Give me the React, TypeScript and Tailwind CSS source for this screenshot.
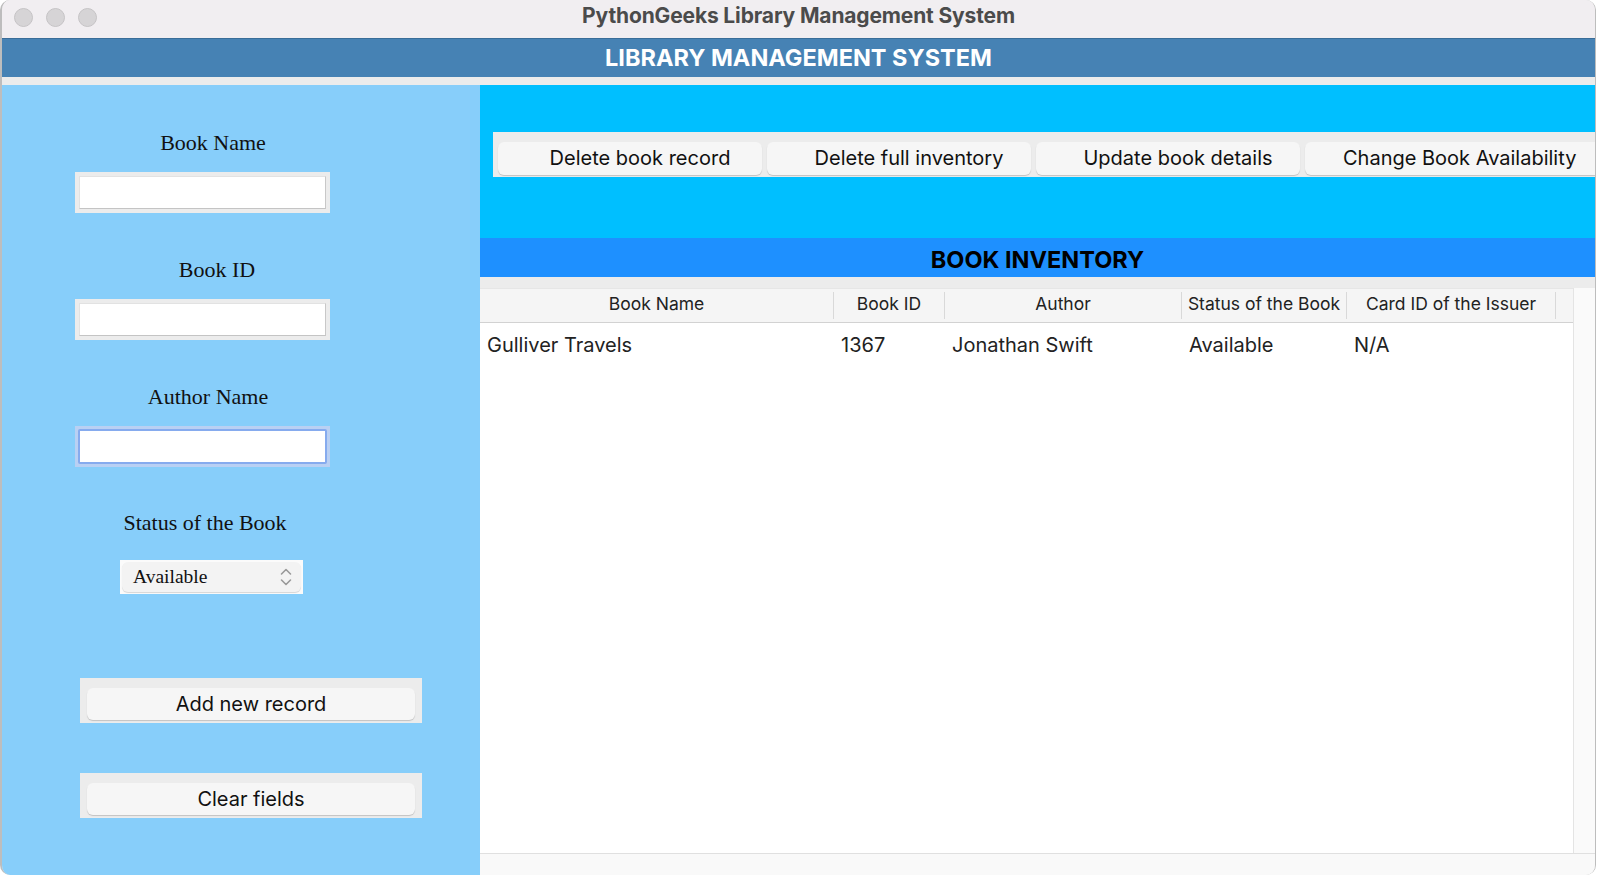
import React from "react";

// column widths of the inventory table (px)
const columns = [
  { label: "Book Name", w: "w-[354px]" },
  { label: "Book ID", w: "w-[111px]" },
  { label: "Author", w: "w-[237px]" },
  { label: "Status of the Book", w: "w-[165px]" },
  { label: "Card ID of the Issuer", w: "w-[209px]" },
];

const rows = [["Gulliver Travels", "1367", "Jonathan Swift", "Available", "N/A"]];

const actions = [
  { label: "Delete book record", w: "w-[264px] justify-center pl-[20px]" },
  { label: "Delete full inventory", w: "w-[264px] justify-center pl-[20px]" },
  { label: "Update book details", w: "w-[264px] justify-center pl-[20px]" },
  { label: "Change Book Availability", w: "w-[316px] justify-start pl-[38px]" },
];

function Entry({ focused = false }: { focused?: boolean }) {
  if (focused) {
    return (
      <div className="ml-[73px] w-[255px] h-[41px] bg-[#b9d0f3] p-[3px]">
        <div className="w-full h-full bg-white border-2 border-[#86abee] rounded-[2px]" />
      </div>
    );
  }
  return (
    <div className="ml-[73px] w-[255px] h-[41px] bg-[#ececec] p-[4px]">
      <div className="w-full h-full bg-white border border-t-[#e2e2e2] border-l-[#e2e2e2] border-b-[#c4c4c4] border-r-[#c8c8c8]" />
    </div>
  );
}

function Label({ text, ml }: { text: string; ml: string }) {
  return (
    <div
      className={`${ml} w-[300px] text-center h-[24px] leading-[24px] text-[22px] text-[#111] font-['Liberation_Serif',serif]`}
    >
      {text}
    </div>
  );
}

function PanelButton({ text, mt }: { text: string; mt: string }) {
  return (
    <div className={`${mt} ml-[78px] w-[342px] h-[45px] bg-[#ececec] pt-[10px] pb-[3px] px-[7px]`}>
      <div className="w-full h-full rounded-[6px] bg-[#f6f6f6] shadow-[0_1px_1px_rgba(0,0,0,0.18)] flex items-center justify-center pb-[1px] text-[20px] text-[#111] font-['Inter',sans-serif]">
        {text}
      </div>
    </div>
  );
}

function UpDown() {
  return (
    <svg width="14" height="22" viewBox="0 0 14 22" fill="none" stroke="#9a9a9a" strokeWidth="1.6" strokeLinecap="round" strokeLinejoin="round">
      <path d="M2.5 8 L7 3.5 L11.5 8" />
      <path d="M2.5 14 L7 18.5 L11.5 14" />
    </svg>
  );
}

export default function App() {
  return (
    <div className="w-[1600px] h-[875px] bg-white flex overflow-hidden">
      <div className="w-[1596px] h-full flex flex-col border-l-2 border-r border-[#bdbdbd] rounded-[10px] overflow-hidden bg-[#ececec]">
        {/* title bar */}
        <div className="h-[38px] shrink-0 bg-[#f1eef1] grid grid-cols-[1fr_auto_1fr] items-center">
          <div className="flex items-center gap-[13px] pl-[12px] pb-[4px]">
            <span className="w-[19px] h-[19px] rounded-full bg-[#d6d4d6] border border-[#c5c3c5]" />
            <span className="w-[19px] h-[19px] rounded-full bg-[#d6d4d6] border border-[#c5c3c5]" />
            <span className="w-[19px] h-[19px] rounded-full bg-[#d6d4d6] border border-[#c5c3c5]" />
          </div>
          <div className="text-[21px] leading-[24px] pb-[6px] font-bold text-[#4b4b4b] tracking-[-0.15px] font-['Inter',sans-serif]">
            PythonGeeks Library Management System
          </div>
          <div />
        </div>

        {/* heading banner */}
        <div className="h-[39px] shrink-0 bg-[#4682b4] border-t border-[#3a6d98] flex items-center justify-center">
          <span className="text-white text-[23.5px] font-bold font-['Inter',sans-serif]">LIBRARY MANAGEMENT SYSTEM</span>
        </div>
        <div className="h-[8px] shrink-0 bg-[#ececec]" />

        <div className="flex-1 flex min-h-0">
          {/* left form panel */}
          <div className="w-[478px] shrink-0 bg-[#87cefa] flex flex-col pt-[46px]">
            <Label text="Book Name" ml="ml-[61px]" />
            <div className="mt-[17px]">
              <Entry />
            </div>
            <div className="mt-[45px]">
              <Label text="Book ID" ml="ml-[65px]" />
            </div>
            <div className="mt-[17px]">
              <Entry />
            </div>
            <div className="mt-[45px]">
              <Label text="Author Name" ml="ml-[56px]" />
            </div>
            <div className="mt-[17px]">
              <Entry focused />
            </div>
            <div className="mt-[44px]">
              <Label text="Status of the Book" ml="ml-[53px]" />
            </div>
            <div className="mt-[25px] ml-[118px] w-[183px] h-[34px] bg-[#fbfbfb] p-[2px]">
              <div className="w-full h-full rounded-[6px] bg-[#f3f3f3] shadow-[0_1px_1px_rgba(0,0,0,0.15)] flex items-center justify-between pl-[11px] pr-[8px]">
                <span className="text-[19.5px] text-[#111] font-['Liberation_Serif',serif]">Available</span>
                <UpDown />
              </div>
            </div>
            <PanelButton text="Add new record" mt="mt-[84px]" />
            <PanelButton text="Clear fields" mt="mt-[50px]" />
          </div>

          {/* right panel */}
          <div className="flex-1 min-w-0 flex flex-col overflow-hidden">
            <div className="h-[153px] shrink-0 bg-[#00bfff] pt-[47px] pl-[13px]">
              <div className="h-[45px] w-[1140px] bg-[#ececec] flex gap-[5px] pt-[10px] pb-[2px] pl-[5px]">
                {actions.map((a) => (
                  <div
                    key={a.label}
                    className={`${a.w} shrink-0 h-full rounded-[6px] bg-[#f6f6f6] shadow-[0_1px_1px_rgba(0,0,0,0.18)] flex items-center pb-[2px] text-[20px] text-[#111] font-['Inter',sans-serif]`}
                  >
                    {a.label}
                  </div>
                ))}
              </div>
            </div>

            <div className="h-[39px] shrink-0 bg-[#1e90ff] flex items-center justify-center pt-[5px]">
              <span className="text-[23.5px] font-bold text-black font-['Inter',sans-serif]">BOOK INVENTORY</span>
            </div>
            <div className="h-[11px] shrink-0 bg-[#ececec]" />

            {/* table */}
            <div className="flex-1 min-h-0 flex bg-white">
              <div className="w-[1093px] shrink-0 flex flex-col font-['Inter',sans-serif]">
                <div className="flex h-[35px] bg-[#f5f5f5] border-b border-[#d2d2d2] border-t border-t-[#e6e6e6]">
                  {columns.map((c) => (
                    <div
                      key={c.label}
                      className={`${c.w} shrink-0 flex items-center justify-center pb-[3px] text-[17.5px] text-[#222] border-r border-[#d9d9d9] my-[3px]`}
                    >
                      {c.label}
                    </div>
                  ))}
                </div>
                {rows.map((r) => (
                  <div key={r[0]} className="flex h-[43px]">
                    {r.map((cell, i) => (
                      <div
                        key={i}
                        className={`${columns[i].w} shrink-0 flex items-center pl-[7px] text-[20px] text-[#222]`}
                      >
                        {cell}
                      </div>
                    ))}
                  </div>
                ))}
              </div>
              <div className="flex-1" />
              <div className="w-[22px] shrink-0 bg-[#fafafa] border-l border-[#e4e4e4]" />
            </div>
            <div className="h-[22px] shrink-0 bg-[#f9f9f9] border-t border-[#e0e0e0]" />
          </div>
        </div>
      </div>
      <div className="flex-1 bg-white" />
    </div>
  );
}
